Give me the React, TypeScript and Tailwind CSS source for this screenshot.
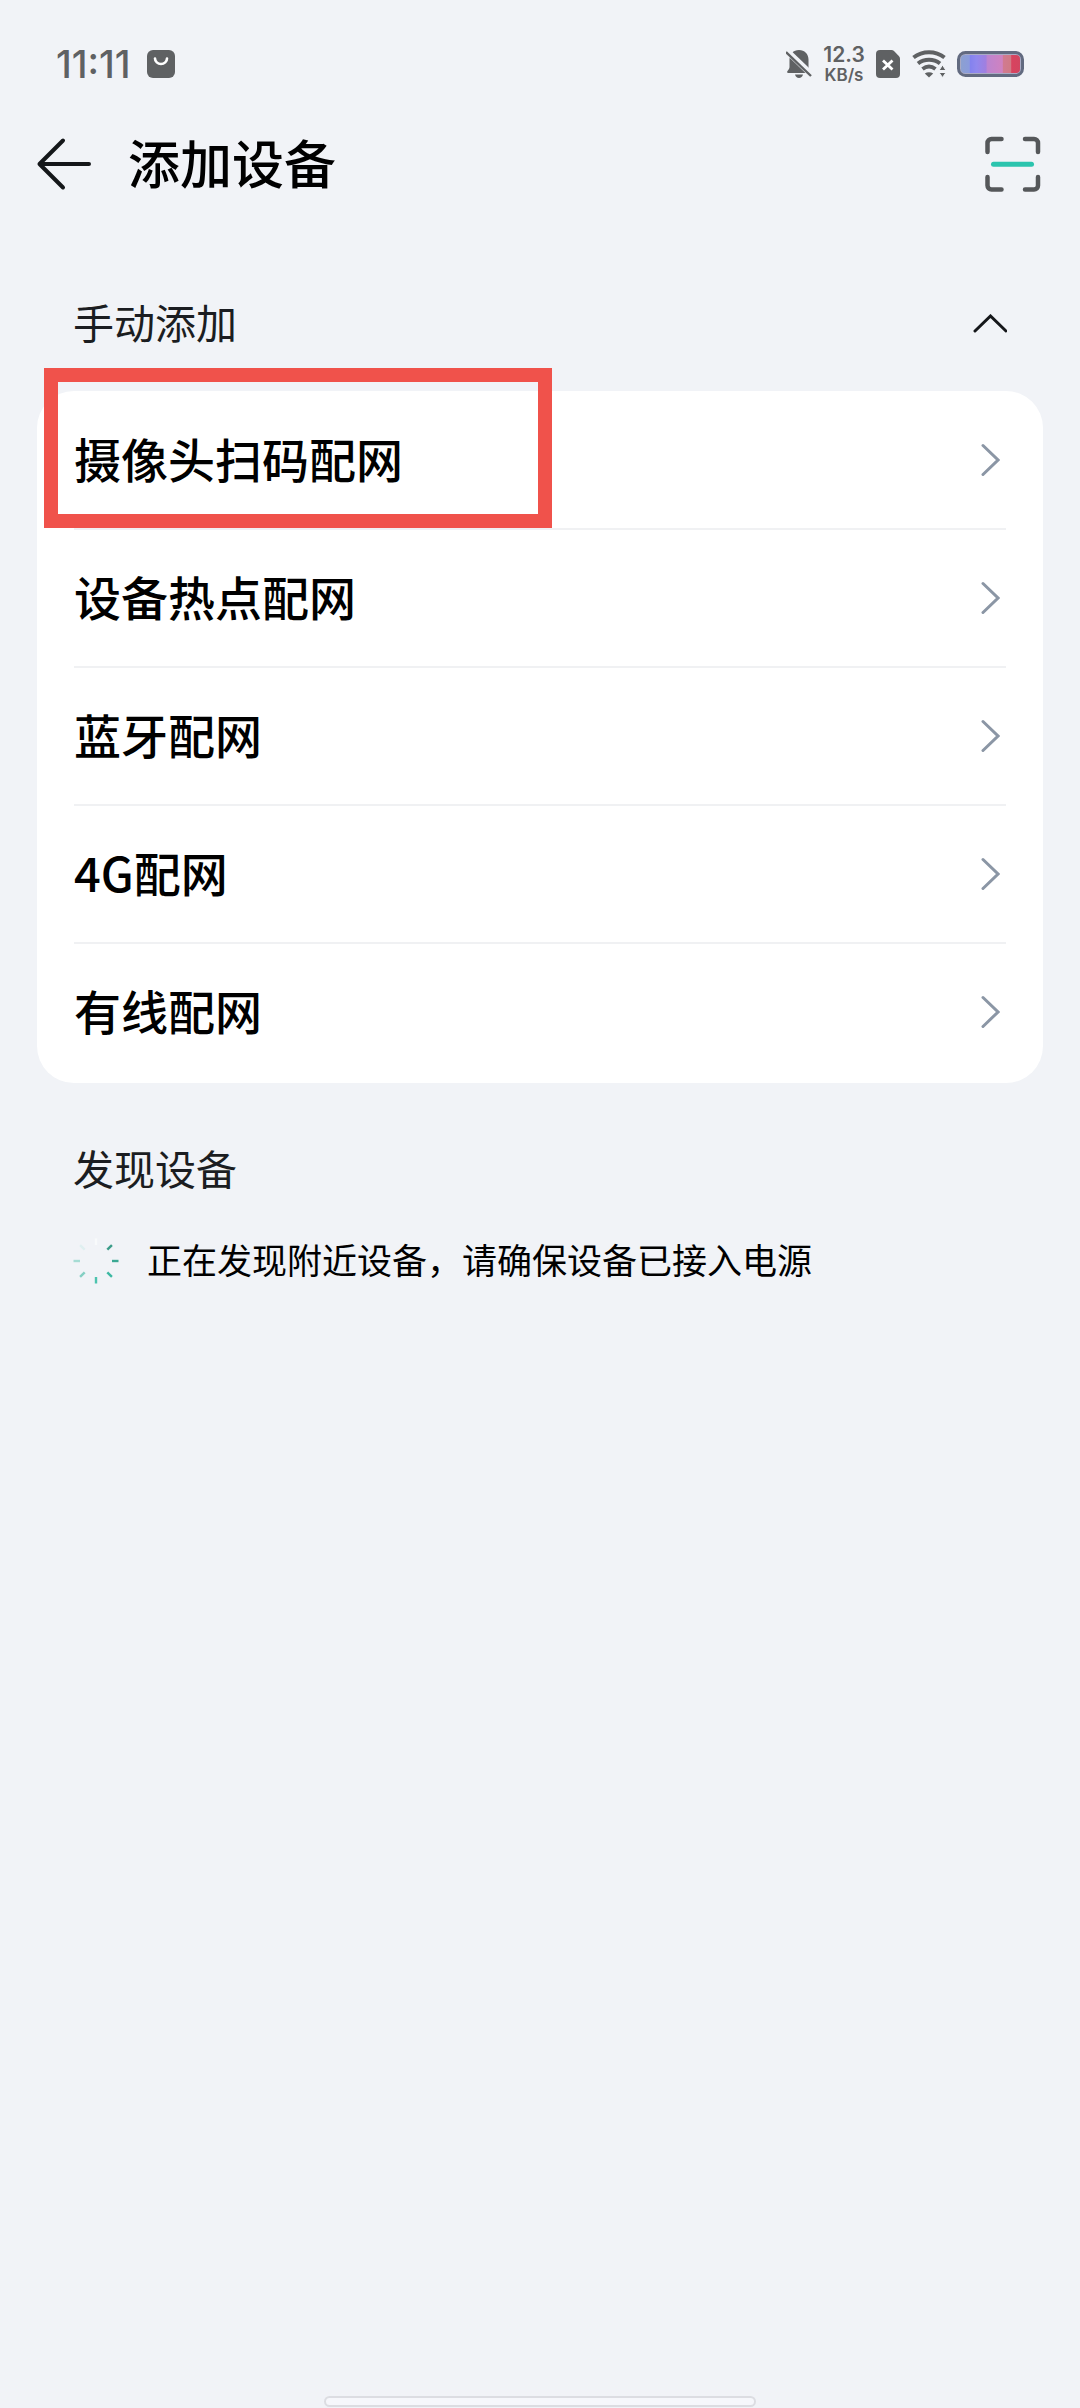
import React, { useState } from "react";

const methods = [
  "摄像头扫码配网",
  "设备热点配网",
  "蓝牙配网",
  "4G配网",
  "有线配网",
];

const spokes = [
  { angle: 0, color: "#f8fafb" },
  { angle: 45, color: "#3a9c88" },
  { angle: 90, color: "#3aa893" },
  { angle: 135, color: "#3cb8a2" },
  { angle: 180, color: "#4cc3ae" },
  { angle: 225, color: "#84cfc3" },
  { angle: 270, color: "#a6dcd4" },
  { angle: 315, color: "#dfeff0" },
];

const StatusBar = () => {
  return (
    <div className="flex h-32 items-center justify-between px-14 text-[#5f6163]">
      <div className="flex items-center gap-4 font-['Inter',sans-serif]">
        <span className="text-[38px] leading-10 font-medium">11:11</span>
        <svg width="28" height="28" viewBox="0 0 28 28">
          <rect width="28" height="28" rx="6" fill="#5f6163" />
          <path
            d="M8 8.500a6 5.500 0 0 0 12 0"
            fill="none"
            stroke="#fff"
            strokeWidth="2.600"
            strokeLinecap="round"
          />
        </svg>
      </div>
      <div className="flex items-center">
        <svg width="26" height="30" viewBox="0 0 26 30" fill="#5f6163">
          <path d="M13 1c-5.600 0-9.500 4-9.500 9.500V18c0 1.500-.8 2.800-2 4-.8 1-.3 2 .8 2H23.700c1.100 0 1.600-1 .8-2-1.200-1.200-2-2.500-2-4v-7.500C22.500 5 18.600 1 13 1z" />
          <path d="M9 25.500h8c-.5 2.300-2 3.500-4 3.500s-3.500-1.200-4-3.500z" />
          <path d="M0 1L26 26" stroke="#f1f3f7" strokeWidth="6" />
          <path d="M0 3L25 27" stroke="#5f6163" strokeWidth="2.400" />
        </svg>
        <div className="ml-3 flex w-10 flex-col items-center pt-0.5 font-['Inter',sans-serif] font-semibold">
          <span className="text-[21px] leading-5">12.3</span>
          <span className="text-[17px] leading-5">KB/s</span>
        </div>
        <svg width="24" height="28" viewBox="0 0 24 28" className="ml-3">
          <path
            d="M4 0h11.500c1 0 1.800.4 2.500 1l4.800 5c.7.8 1.200 1.600 1.200 2.600V24a4 4 0 0 1-4 4H4a4 4 0 0 1-4-4V4a4 4 0 0 1 4-4z"
            fill="#5f6163"
          />
          <path
            d="M7 10.500l9.500 9M16.500 10.500l-9.500 9"
            stroke="#fff"
            strokeWidth="2.800"
          />
        </svg>
        <svg
          width="34"
          height="28"
          viewBox="0 0 34 28"
          fill="none"
          stroke="#5f6163"
          className="ml-3"
        >
          <path d="M1.500 7.500C10.500.5 23.500.5 32.500 7.500" strokeWidth="4" />
          <path d="M6 13.500c6.500-5 15.500-5 22 0" strokeWidth="4" />
          <path d="M10.500 19c4-3 9-3 13 0" strokeWidth="4" />
          <path
            d="M12.800 23.500c2.500-1.800 5.900-1.800 8.400 0L17 27.500z"
            fill="#5f6163"
            stroke="none"
          />
          <path
            d="M27 20.500l3.500-5.500 3.500 5.500zM27 22.500l3.500 5 3.500-5z"
            fill="#5f6163"
            stroke="#f1f3f7"
            strokeWidth="1"
          />
        </svg>
        <svg width="67" height="26" viewBox="0 0 67 26" className="ml-[11px]">
          <defs>
            <linearGradient id="battery" x1="0" x2="1" y1="0" y2="0">
              <stop offset="0" stopColor="#8ca0d0" />
              <stop offset="0.140" stopColor="#8a9bdc" />
              <stop offset="0.160" stopColor="#8482ee" />
              <stop offset="0.260" stopColor="#9088ee" />
              <stop offset="0.420" stopColor="#a07fe0" />
              <stop offset="0.450" stopColor="#bd84cf" />
              <stop offset="0.700" stopColor="#cf82c0" />
              <stop offset="0.720" stopColor="#d17a90" />
              <stop offset="0.840" stopColor="#d07a86" />
              <stop offset="0.860" stopColor="#d8435f" />
              <stop offset="1" stopColor="#d24560" />
            </linearGradient>
          </defs>
          <rect
            x="1.500"
            y="1.500"
            width="64"
            height="23"
            rx="7"
            fill="#a9aac4"
            stroke="#626a80"
            strokeWidth="3"
          />
          <rect x="4" y="4" width="59" height="18" rx="4" fill="url(#battery)" />
        </svg>
      </div>
    </div>
  );
};

const Header = () => {
  return (
    <header className="flex h-[72px] items-center px-9">
      <button aria-label="返回" className="cursor-pointer">
        <svg
          width="56"
          height="56"
          viewBox="0 0 56 56"
          fill="none"
          stroke="#15171a"
          strokeWidth="4"
          strokeLinecap="round"
          strokeLinejoin="round"
        >
          <path d="M27 4.500L3.500 28L27 51.500M3.500 28H53" />
        </svg>
      </button>
      <h1 className="ml-9 flex-1 pb-1 text-[52px] leading-[68px] font-medium">
        添加设备
      </h1>
      <button aria-label="扫一扫" className="cursor-pointer">
        <svg
          width="60"
          height="60"
          viewBox="0 0 60 60"
          fill="none"
          stroke="#55575a"
          strokeWidth="4.500"
          strokeLinecap="round"
        >
          <path d="M3.500 18V9a4 4 0 0 1 4-4h10M41 5h9a4 4 0 0 1 4 4v9M54 43v8.500a4 4 0 0 1-4 4H41M17.500 55.500H7.500a4 4 0 0 1-4-4V43" />
          <path d="M9.500 30.300h38" stroke="#2bc4ae" strokeWidth="5" />
        </svg>
      </button>
    </header>
  );
};

const Spinner = () => {
  return (
    <svg width="46" height="46" viewBox="-23 -23 46 46">
      {spokes.map((s) => (
        <path
          key={s.angle}
          d="M0 -16V-22.500"
          stroke={s.color}
          strokeWidth="2.400"
          transform={`rotate(${s.angle})`}
        />
      ))}
    </svg>
  );
};

export default function App() {
  const [open, setOpen] = useState(true);

  return (
    <div className="flex min-h-screen flex-col bg-[#f1f3f7] font-['Noto_Sans_CJK_SC',sans-serif] text-black">
      <StatusBar />
      <Header />

      <main className="px-[37px] pt-14">
        <button
          onClick={() => setOpen(!open)}
          aria-expanded={open}
          className="flex h-[135px] w-full cursor-pointer items-center justify-between px-9 text-[41px] text-[#1b1d21]"
        >
          <span className="pb-1">手动添加</span>
          <svg
            width="34"
            height="20"
            viewBox="0 0 34 20"
            fill="none"
            stroke="#15171a"
            strokeWidth="3"
            strokeLinecap="round"
            className={open ? "" : "rotate-180"}
          >
            <path d="M2 17L17.500 2L33 17" />
          </svg>
        </button>

        {open && (
          <ul className="rounded-[37px] bg-white px-[37px] py-px">
            {methods.map((name, i) => (
              <li
                key={name}
                className="relative border-b-2 border-[#f0f1f3] last:border-white"
              >
                <button className="flex h-[136px] w-full cursor-pointer items-center justify-between pr-1.5 text-[47px] font-medium">
                  <span className="pb-1">{name}</span>
                  <svg
                    width="20"
                    height="34"
                    viewBox="0 0 20 34"
                    fill="none"
                    stroke="#8b96a5"
                    strokeWidth="3"
                    strokeLinecap="round"
                  >
                    <path d="M3 2.500L18 17L3 31.500" />
                  </svg>
                </button>
                {i === 0 && (
                  <div className="pointer-events-none absolute -top-6 -left-[30px] h-40 w-[508px] border-14 border-[#f0524b]" />
                )}
              </li>
            ))}
          </ul>
        )}

        <section className="px-9 pt-[54px]">
          <h2 className="text-[41px] leading-[60px] text-[#1b1d21]">
            发现设备
          </h2>
          <div className="mt-8 flex items-center gap-7">
            <Spinner />
            <p className="pb-1 text-[35px] leading-[60px]">
              正在发现附近设备，请确保设备已接入电源
            </p>
          </div>
        </section>
      </main>

      <div className="mt-auto flex justify-center pb-px">
        <div className="h-[11px] w-2/5 rounded-full border-2 border-[#dcdde2] bg-[#f6f7fb]" />
      </div>
    </div>
  );
}
